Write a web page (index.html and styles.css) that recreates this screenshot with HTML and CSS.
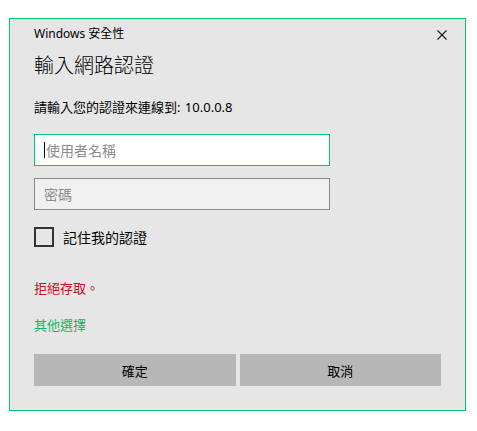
FILE: index.html
```html
<!DOCTYPE html>
<html lang="zh-Hant">
<head>
    <meta charset="UTF-8">
    <meta name="viewport" content="width=device-width, initial-scale=1.0">
    <title>Windows 安全性</title>
    <link rel="stylesheet" href="styles.css">
</head>
<body>
    <div class="dialog">
        <div class="titlebar">
            <span class="app">Windows 安全性</span>
            <span class="close">
                <svg width="10" height="10" viewBox="0 0 10 10"><path d="M0.5 0.5 L9.5 9.5 M9.5 0.5 L0.5 9.5" stroke="#1a1a1a" stroke-width="1.1" fill="none"/></svg>
            </span>
        </div>
        <h1>輸入網路認證</h1>
        <p class="msg">請輸入您的認證來連線到: 10.0.0.8</p>
        <div class="field active"><span class="caret"></span><span class="ph">使用者名稱</span></div>
        <div class="field pass"><span class="ph">密碼</span></div>
        <label class="remember"><span class="box"></span>記住我的認證</label>
        <p class="error">拒絕存取。</p>
        <p class="more">其他選擇</p>
        <div class="buttons">
            <button>確定</button>
            <button>取消</button>
        </div>
    </div>
</body>
</html>
```
FILE: styles.css
```css
body { margin: 0; background: #fff; font-family: "Noto Sans", "Noto Sans CJK TC", sans-serif; color: #000;}
.dialog { width: 457px; height: 393px; margin: 18px 0 0 9px; border: 1px solid #00cc6a; background: #e6e6e6; padding: 0 24px; box-sizing: border-box;}
.titlebar { height: 30px; display: flex; align-items: center; justify-content: space-between; margin-right: -6px;}
.app { font-size: 12px; line-height: 16px;}
.close { display: flex; width: 10px; height: 10px; margin-top: 2px;}
h1 { font-size: 20px; font-weight: 300; line-height: 28px; margin: 3px 0 0;}
.msg { font-size: 13px; line-height: 20px; margin: 17px 0 0; word-spacing: 1px;}
.field { width: 296px; height: 32px; box-sizing: border-box; border: 1px solid #8a8a8a; background: #f0f0f0; display: flex; align-items: center; padding-left: 9px; margin-top: 12px; font-size: 14px; color: #8c8c8c;}
.field.active { border-color: #00cc6a; background: #fff; margin-top: 17px;}
.caret { width: 1px; height: 16px; background: #000; margin-right: 1px;}
.remember { display: flex; align-items: center; margin-top: 17px; font-size: 14px; height: 20px;}
.box { width: 20px; height: 20px; box-sizing: border-box; border: 2px solid #333; margin-right: 9px;}
.error { color: #c50f1f; font-size: 13px; line-height: 20px; margin: 31px 0 0;}
.more { color: #10b65e; font-size: 13px; line-height: 20px; margin: 17px 0 0;}
.buttons { display: flex; gap: 4px; margin-top: 19px;}
.buttons button { width: 202px; height: 32px; border: none; background: #b7b7b7; font-family: inherit; font-size: 13px; color: #000; padding: 0;}
```
